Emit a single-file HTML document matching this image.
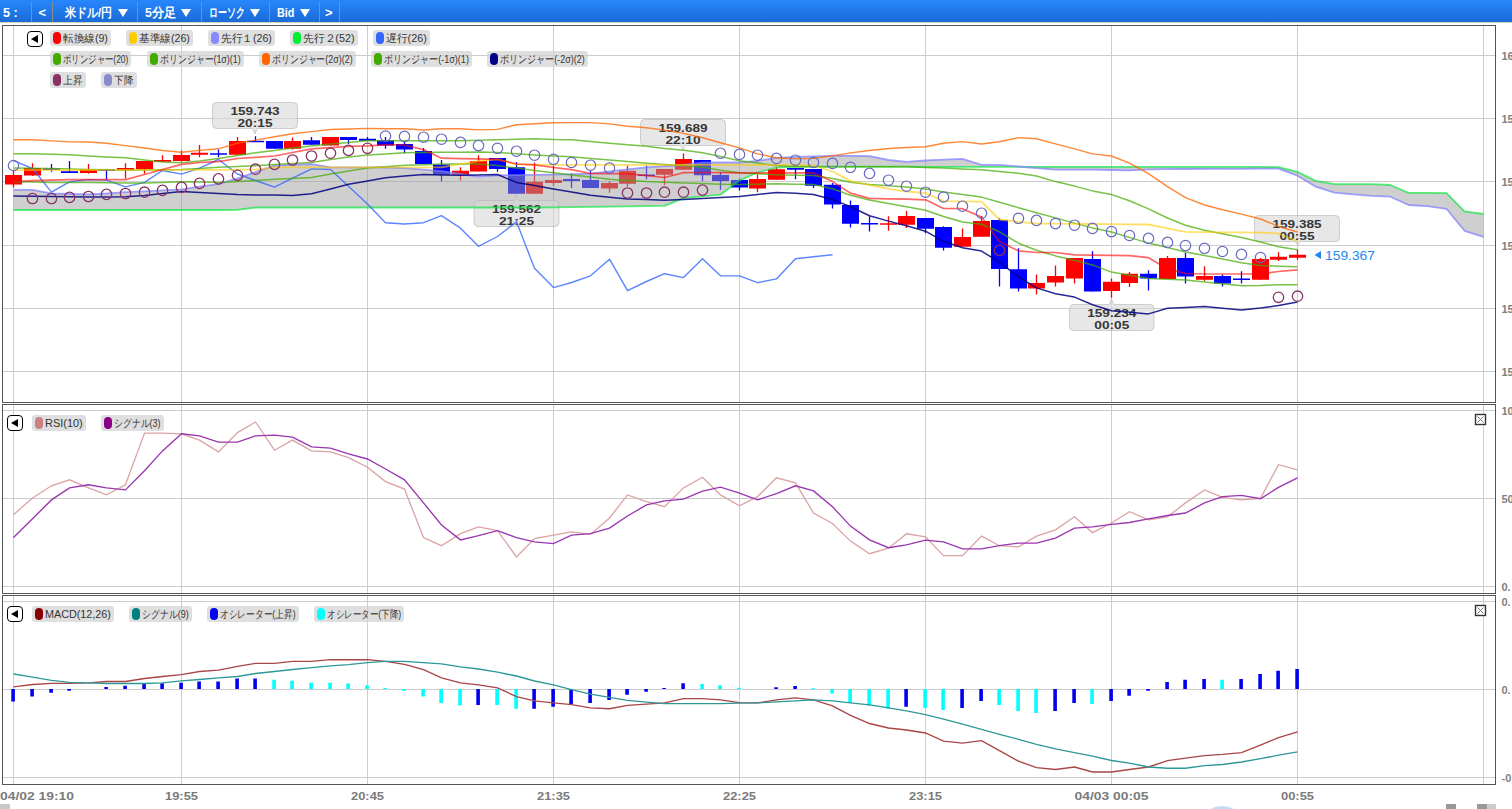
<!DOCTYPE html>
<html><head><meta charset="utf-8"><style>
html,body{margin:0;padding:0;background:#fff;}
body{width:1512px;height:809px;overflow:hidden;position:relative;font-family:"Liberation Sans",sans-serif;}
#hdr{position:absolute;left:0;top:0;width:1512px;height:22px;background:linear-gradient(#2886fd,#1a6bd6);}
#hline{position:absolute;left:0;top:22px;width:1512px;height:1px;background:#d2cfbd;}
.ht{position:absolute;top:5px;color:#fff;font-size:13px;font-weight:bold;line-height:16px;white-space:nowrap;}
.tri{position:absolute;top:9px;width:0;height:0;border-left:5px solid transparent;border-right:5px solid transparent;border-top:8px solid #fff;}
.sep{position:absolute;top:2px;width:1px;height:20px;background:#8c8c8c;}
svg{position:absolute;left:0;top:0;}
.bt{font:bold 11.5px "Liberation Sans",sans-serif;fill:#363636;}
.cp{font:13px "Liberation Sans",sans-serif;fill:#1e88ee;}
.ax{font:bold 11px "Liberation Sans",sans-serif;fill:#808080;}
.tl{font:bold 11px "Liberation Sans",sans-serif;fill:#7a7a7a;}
.pill{position:absolute;height:16px;line-height:16px;background:rgba(210,210,210,0.7);border-radius:3px;font-size:11px;color:#333;white-space:nowrap;}
.ptx{position:absolute;left:13px;top:0;display:inline-block;transform-origin:0 0;white-space:nowrap;}
.htx{display:inline-block;transform-origin:0 0;white-space:nowrap;}
.pill i{position:absolute;left:3px;top:2px;width:8px;height:12px;border-radius:4px;}
.tog{position:absolute;box-sizing:border-box;width:16px;height:16px;border:1.6px solid #000;border-radius:4px;background:#fff;}
.tog b{position:absolute;left:2.6px;top:2.6px;width:0;height:0;border-top:4px solid transparent;border-bottom:4px solid transparent;border-right:7px solid #000;}
</style></head><body>
<div id="hdr">
<div class="ht" style="left:2.5px"><span class="htx" data-k="htx|5 :" style="transform:scaleX(0.9689)">5 :</span></div>
<div class="ht" style="left:38.4px"><span class="htx" data-k="htx|&lt;" style="transform:scaleX(1.0000)">&lt;</span></div>
<div class="ht" style="left:64.8px"><span class="htx" data-k="htx|米ドル/円" style="transform:scaleX(0.8485)">米ドル/円</span></div>
<div class="ht" style="left:145.3px"><span class="htx" data-k="htx|5分足" style="transform:scaleX(0.9448)">5分足</span></div>
<div class="ht" style="left:208.9px"><span class="htx" data-k="htx|ローソク" style="transform:scaleX(0.6865)">ローソク</span></div>
<div class="ht" style="left:276.8px"><span class="htx" data-k="htx|Bid" style="transform:scaleX(0.8304)">Bid</span></div>
<div class="ht" style="left:325px"><span class="htx" data-k="htx|&gt;" style="transform:scaleX(1.0000)">&gt;</span></div>
<div class="tri" style="left:118px"></div>
<div class="tri" style="left:181.3px"></div>
<div class="tri" style="left:250px"></div>
<div class="tri" style="left:300.2px"></div>
<span class="sep" style="left:31px"></span>
<span class="sep" style="left:52px"></span>
<span class="sep" style="left:137px"></span>
<span class="sep" style="left:201px"></span>
<span class="sep" style="left:269px"></span>
<span class="sep" style="left:319px"></span>
<span class="sep" style="left:339px"></span>
</div><div id="hline"></div>
<svg width="1512" height="809" viewBox="0 0 1512 809">
<path d="M13.5 25 V402 M181.5 25 V402 M367.5 25 V402 M553.5 25 V402 M739.5 25 V402 M925.5 25 V402 M1111.5 25 V402 M1297.5 25 V402 M1483.5 25 V402 M3 55.5 H1496 M3 118.5 H1496 M3 181.5 H1496 M3 245.5 H1496 M3 308.5 H1496 M3 371.5 H1496 M13.5 404 V593 M181.5 404 V593 M367.5 404 V593 M553.5 404 V593 M739.5 404 V593 M925.5 404 V593 M1111.5 404 V593 M1297.5 404 V593 M1483.5 404 V593 M3 410.5 H1496 M3 498.5 H1496 M3 586.5 H1496 M13.5 595 V784 M181.5 595 V784 M367.5 595 V784 M553.5 595 V784 M739.5 595 V784 M925.5 595 V784 M1111.5 595 V784 M1297.5 595 V784 M1483.5 595 V784 M3 601.5 H1496 M3 689.5 H1496 M3 777.5 H1496" stroke="#cccccc" stroke-width="1" fill="none"/>
<path d="M5 175 h17 v9.5 h-17 Z M24 168.1 h17 v7.5 h-17 Z M80 169.5 h17 v3.4 h-17 Z M117 168 h17 v2.2 h-17 Z M136 160.9 h17 v8.3 h-17 Z M154 160 h17 v1.7 h-17 Z M173 154.9 h17 v6 h-17 Z M191 152.8 h17 v2 h-17 Z M229 141.1 h17 v13.7 h-17 Z M284 141.1 h17 v7.7 h-17 Z M322 137.1 h17 v8.5 h-17 Z M452 170.8 h17 v4 h-17 Z M470 160.9 h17 v10.7 h-17 Z M526 181.7 h17 v12.1 h-17 Z M545 180.1 h17 v2.9 h-17 Z M601 183 h17 v5.5 h-17 Z M619 170.8 h17 v12.9 h-17 Z M656 168.9 h17 v5.9 h-17 Z M675 158.9 h17 v10.8 h-17 Z M749 178.9 h17 v9.6 h-17 Z M768 169.2 h17 v10.5 h-17 Z M880 223.3 h17 v1.5 h-17 Z M898 216 h17 v8.7 h-17 Z M954 237.1 h17 v9.6 h-17 Z M973 221 h17 v15.8 h-17 Z M1028 283 h17 v5.5 h-17 Z M1047 276.1 h17 v6.4 h-17 Z M1066 258.1 h17 v20.4 h-17 Z M1103 281.7 h17 v9.2 h-17 Z M1121 273.7 h17 v9.2 h-17 Z M1159 258 h17 v20.9 h-17 Z M1196 276.1 h17 v3.7 h-17 Z M1252 258.9 h17 v20.8 h-17 Z M1270 256.7 h17 v3 h-17 Z M1289 254.7 h17 v3.1 h-17 Z" stroke="#ff0000" stroke-width="0" fill="#ff0000"/>
<path d="M13.5 170.5 V187.4 M32.5 163.3 V176 M88.5 164 V173.8 M125.5 163.3 V178.5 M144.5 160.9 V173.7 M162.5 155.2 V161.7 M181.5 150.4 V161.7 M199.5 145.1 V157.3 M237.5 137.1 V154.8 M292.5 137.6 V149.6 M330.5 137.1 V145.6 M460.5 167.3 V180.5 M478.5 155.2 V171.6 M534.5 162.5 V193.8 M553.5 165.7 V185.8 M609.5 181 V192.7 M627.5 165.7 V186.6 M664.5 168.9 V185 M683.5 153.6 V169.7 M757.5 174.5 V192.2 M776.5 167.3 V179.7 M888.5 216.3 V230.7 M906.5 211 V227.9 M962.5 228.4 V246.7 M981.5 215.9 V236.8 M1036.5 274.5 V294.6 M1055.5 265.4 V286.6 M1074.5 258.1 V283.4 M1111.5 278.5 V297.8 M1129.5 272.1 V286.9 M1167.5 256 V278.9 M1204.5 266.2 V280.9 M1260.5 258 V279.7 M1278.5 252.3 V261 M1297.5 249.5 V259.7" stroke="#ff0000" stroke-width="1.3" fill="none"/>
<path d="M43 168.4 h17 v1.5 h-17 Z M61 171.2 h17 v1.7 h-17 Z M98 169.2 h17 v1.5 h-17 Z M210 153.2 h17 v1.6 h-17 Z M247 140.8 h17 v1.5 h-17 Z M266 141.1 h17 v7.7 h-17 Z M303 140.3 h17 v4.5 h-17 Z M340 137.1 h17 v2.9 h-17 Z M359 138.7 h17 v2.1 h-17 Z M377 140.3 h17 v5.3 h-17 Z M396 144 h17 v5.6 h-17 Z M415 150.9 h17 v13.2 h-17 Z M433 164.4 h17 v10.4 h-17 Z M489 158 h17 v10.9 h-17 Z M508 167.3 h17 v26.5 h-17 Z M563 178.9 h17 v2 h-17 Z M582 180.1 h17 v7.8 h-17 Z M638 174.5 h17 v1.5 h-17 Z M694 160.1 h17 v15.2 h-17 Z M712 175 h17 v5.9 h-17 Z M731 180.1 h17 v7.3 h-17 Z M787 168.1 h17 v1.6 h-17 Z M805 168.9 h17 v16.9 h-17 Z M824 184.8 h17 v19.7 h-17 Z M842 205 h17 v18.8 h-17 Z M861 223 h17 v1.6 h-17 Z M917 218 h17 v10.7 h-17 Z M935 227.1 h17 v20.6 h-17 Z M991 219.9 h17 v49 h-17 Z M1010 269.2 h17 v19.3 h-17 Z M1084 258.9 h17 v32.6 h-17 Z M1140 273.7 h17 v4.8 h-17 Z M1177 258 h17 v18.6 h-17 Z M1214 276.1 h17 v7.3 h-17 Z M1233 278.5 h17 v1.5 h-17 Z" stroke="#0000ff" stroke-width="0" fill="#0000ff"/>
<path d="M51.5 164 V171.8 M69.5 160.9 V172.9 M106.5 169.2 V179.5 M218.5 149.6 V157.3 M255.5 136.3 V141.9 M274.5 141.1 V148.8 M311.5 137.1 V144.8 M348.5 137.1 V144 M367.5 137.1 V140.8 M385.5 137.1 V148.8 M404.5 141.6 V153.2 M423.5 148 V164.1 M441.5 160.1 V181.4 M497.5 158 V171.8 M516.5 162.1 V193.8 M571.5 173.4 V187.9 M590.5 171.3 V187.9 M646.5 165.7 V179.3 M702.5 160.1 V180.9 M720.5 172.1 V189.8 M739.5 178.5 V190.6 M795.5 168.1 V179.3 M813.5 168.9 V187.9 M832.5 183 V208.6 M850.5 200.5 V227.5 M869.5 216.3 V231.4 M925.5 218 V233.2 M943.5 226.3 V250.4 M999.5 218.3 V286.6 M1018.5 248.3 V291.4 M1092.5 251.2 V291.5 M1148.5 270.2 V290.6 M1185.5 252.8 V283.4 M1222.5 274.5 V286.6 M1241.5 271.3 V283.4" stroke="#0000ff" stroke-width="1.3" fill="none"/>
<polygon points="13.5,189.8 32.5,189.9 51.5,193.5 69.5,194 88.5,194.3 106.5,193.5 125.5,192.2 144.5,191.3 162.5,190.4 181.5,189.4 199.5,186.6 218.5,184.2 237.5,178.4 255.5,172.2 274.5,165.7 292.5,164.9 311.5,164.1 330.5,167.3 348.5,167.3 367.5,167.3 385.5,167.5 404.5,168.1 423.5,169.7 441.5,171.2 460.5,174 478.5,176.7 497.5,175.4 516.5,175.1 534.5,174.8 553.5,174.6 571.5,174.2 590.5,173.7 609.5,171.4 627.5,169.4 646.5,167.4 664.5,166.2 683.5,165 702.5,162.6 720.5,162.5 739.5,162.5 757.5,161 776.5,157.9 795.5,156.8 813.5,156.3 832.5,155.7 850.5,155.8 869.5,156.1 888.5,160 906.5,161.8 925.5,160.5 943.5,159.7 962.5,158.9 981.5,164.9 999.5,164.9 1018.5,166.5 1036.5,168.1 1055.5,169.7 1074.5,169.7 1092.5,169.7 1111.5,170 1129.5,170.4 1148.5,169.3 1167.5,169.1 1185.5,169 1204.5,168.9 1222.5,168.9 1241.5,168.8 1260.5,168.7 1278.5,168.6 1297.5,175.7 1315.5,186.6 1334.5,192.7 1353.5,194.3 1371.5,195.8 1390.5,196.7 1408.5,205 1427.5,206.2 1446.5,208.8 1464.5,230.8 1483.5,236.8 1483.5,214 1464.5,211.3 1446.5,193.1 1427.5,192.8 1408.5,192.8 1390.5,185 1371.5,184.2 1353.5,184.2 1334.5,184.2 1315.5,180.9 1297.5,171.9 1278.5,167.1 1260.5,166.9 1241.5,166.9 1222.5,166.9 1204.5,166.9 1185.5,166.9 1167.5,166.9 1148.5,166.9 1129.5,166.9 1111.5,166.8 1092.5,166.8 1074.5,166.8 1055.5,166.8 1036.5,166.8 1018.5,166.8 999.5,166.8 981.5,166.8 962.5,166.8 943.5,166.8 925.5,166.8 906.5,166.7 888.5,166.7 869.5,166.7 850.5,166.7 832.5,166.7 813.5,166.7 795.5,166.7 776.5,167.6 757.5,172.5 739.5,180.4 720.5,194.7 702.5,196.3 683.5,198.2 664.5,205.8 646.5,206.1 627.5,206.3 609.5,206.6 590.5,206.8 571.5,207.1 553.5,207.3 534.5,207.5 516.5,207.5 497.5,207.5 478.5,207.5 460.5,207.5 441.5,207.5 423.5,207.5 404.5,207.5 385.5,207.5 367.5,207.5 348.5,207.5 330.5,207.5 311.5,207.5 292.5,207.5 274.5,207.5 255.5,207.5 237.5,209.8 218.5,210 199.5,210 181.5,210 162.5,210 144.5,210 125.5,210 106.5,210 88.5,210 69.5,210 51.5,210 32.5,210 13.5,210" fill="rgba(160,160,160,0.5)"/>
<path d="M216.5 102.5 H293.5 Q297.5 102.5 297.5 106.5 V124.5 Q297.5 128.5 293.5 128.5 H257.2 L255 134 L252.8 128.5 H216.5 Q212.5 128.5 212.5 124.5 V106.5 Q212.5 102.5 216.5 102.5 Z" fill="rgba(215,215,215,0.6)" stroke="rgba(180,180,180,0.6)" stroke-width="1"/>
<text x="255" y="115" text-anchor="middle" class="bt" textLength="49" lengthAdjust="spacingAndGlyphs">159.743</text>
<text x="255" y="127" text-anchor="middle" class="bt" textLength="35" lengthAdjust="spacingAndGlyphs">20:15</text>
<path d="M644.5 119.5 H721.5 Q725.5 119.5 725.5 123.5 V141.5 Q725.5 145.5 721.5 145.5 H685.2 L683 150 L680.8 145.5 H644.5 Q640.5 145.5 640.5 141.5 V123.5 Q640.5 119.5 644.5 119.5 Z" fill="rgba(215,215,215,0.6)" stroke="rgba(180,180,180,0.6)" stroke-width="1"/>
<text x="683" y="132" text-anchor="middle" class="bt" textLength="49" lengthAdjust="spacingAndGlyphs">159.689</text>
<text x="683" y="144" text-anchor="middle" class="bt" textLength="35" lengthAdjust="spacingAndGlyphs">22:10</text>
<path d="M478 200.5 H514.3 L516.5 195.5 L518.7 200.5 H555 Q559 200.5 559 204.5 V222.5 Q559 226.5 555 226.5 H478 Q474 226.5 474 222.5 V204.5 Q474 200.5 478 200.5 Z" fill="rgba(215,215,215,0.6)" stroke="rgba(180,180,180,0.6)" stroke-width="1"/>
<text x="516.5" y="213" text-anchor="middle" class="bt" textLength="49" lengthAdjust="spacingAndGlyphs">159.562</text>
<text x="516.5" y="225" text-anchor="middle" class="bt" textLength="35" lengthAdjust="spacingAndGlyphs">21:25</text>
<path d="M1073.5 304.5 H1109.3 L1111.5 299 L1113.7 304.5 H1150 Q1154 304.5 1154 308.5 V326.5 Q1154 330.5 1150 330.5 H1073.5 Q1069.5 330.5 1069.5 326.5 V308.5 Q1069.5 304.5 1073.5 304.5 Z" fill="rgba(215,215,215,0.6)" stroke="rgba(180,180,180,0.6)" stroke-width="1"/>
<text x="1111.8" y="317" text-anchor="middle" class="bt" textLength="49" lengthAdjust="spacingAndGlyphs">159.234</text>
<text x="1111.8" y="329" text-anchor="middle" class="bt" textLength="35" lengthAdjust="spacingAndGlyphs">00:05</text>
<path d="M1258.5 215.5 H1335.5 Q1339.5 215.5 1339.5 219.5 V237.5 Q1339.5 241.5 1335.5 241.5 H1299.7 L1297.5 245.5 L1295.3 241.5 H1258.5 Q1254.5 241.5 1254.5 237.5 V219.5 Q1254.5 215.5 1258.5 215.5 Z" fill="rgba(215,215,215,0.6)" stroke="rgba(180,180,180,0.6)" stroke-width="1"/>
<text x="1297" y="228" text-anchor="middle" class="bt" textLength="49" lengthAdjust="spacingAndGlyphs">159.385</text>
<text x="1297" y="240" text-anchor="middle" class="bt" textLength="35" lengthAdjust="spacingAndGlyphs">00:55</text>
<polyline points="13.5,210 32.5,210 51.5,210 69.5,210 88.5,210 106.5,210 125.5,210 144.5,210 162.5,210 181.5,210 199.5,210 218.5,210 237.5,209.8 255.5,207.5 274.5,207.5 292.5,207.5 311.5,207.5 330.5,207.5 348.5,207.5 367.5,207.5 385.5,207.5 404.5,207.5 423.5,207.5 441.5,207.5 460.5,207.5 478.5,207.5 497.5,207.5 516.5,207.5 534.5,207.5 553.5,207.3 571.5,207.1 590.5,206.8 609.5,206.6 627.5,206.3 646.5,206.1 664.5,205.8 683.5,198.2 702.5,196.3 720.5,194.7 739.5,180.4 757.5,172.5 776.5,167.6 795.5,166.7 813.5,166.7 832.5,166.7 850.5,166.7 869.5,166.7 888.5,166.7 906.5,166.7 925.5,166.8 943.5,166.8 962.5,166.8 981.5,166.8 999.5,166.8 1018.5,166.8 1036.5,166.8 1055.5,166.8 1074.5,166.8 1092.5,166.8 1111.5,166.8 1129.5,166.9 1148.5,166.9 1167.5,166.9 1185.5,166.9 1204.5,166.9 1222.5,166.9 1241.5,166.9 1260.5,166.9 1278.5,167.1 1297.5,171.9 1315.5,180.9 1334.5,184.2 1353.5,184.2 1371.5,184.2 1390.5,185 1408.5,192.8 1427.5,192.8 1446.5,193.1 1464.5,211.3 1483.5,214" fill="none" stroke="#00e636" stroke-width="1.8" stroke-linejoin="round" stroke-opacity="0.65"/>
<polyline points="13.5,189.8 32.5,189.9 51.5,193.5 69.5,194 88.5,194.3 106.5,193.5 125.5,192.2 144.5,191.3 162.5,190.4 181.5,189.4 199.5,186.6 218.5,184.2 237.5,178.4 255.5,172.2 274.5,165.7 292.5,164.9 311.5,164.1 330.5,167.3 348.5,167.3 367.5,167.3 385.5,167.5 404.5,168.1 423.5,169.7 441.5,171.2 460.5,174 478.5,176.7 497.5,175.4 516.5,175.1 534.5,174.8 553.5,174.6 571.5,174.2 590.5,173.7 609.5,171.4 627.5,169.4 646.5,167.4 664.5,166.2 683.5,165 702.5,162.6 720.5,162.5 739.5,162.5 757.5,161 776.5,157.9 795.5,156.8 813.5,156.3 832.5,155.7 850.5,155.8 869.5,156.1 888.5,160 906.5,161.8 925.5,160.5 943.5,159.7 962.5,158.9 981.5,164.9 999.5,164.9 1018.5,166.5 1036.5,168.1 1055.5,169.7 1074.5,169.7 1092.5,169.7 1111.5,170 1129.5,170.4 1148.5,169.3 1167.5,169.1 1185.5,169 1204.5,168.9 1222.5,168.9 1241.5,168.8 1260.5,168.7 1278.5,168.6 1297.5,175.7 1315.5,186.6 1334.5,192.7 1353.5,194.3 1371.5,195.8 1390.5,196.7 1408.5,205 1427.5,206.2 1446.5,208.8 1464.5,230.8 1483.5,236.8" fill="none" stroke="#8080ff" stroke-width="1.8" stroke-linejoin="round" stroke-opacity="0.72"/>
<polyline points="13.5,160.6 32.5,168.5 51.5,192.1 69.5,181.8 88.5,179.6 106.5,180.1 125.5,186.9 144.5,182.4 162.5,170.5 181.5,174.1 199.5,168.2 218.5,159.5 237.5,174 255.5,180.5 274.5,187.1 292.5,178.1 311.5,168.9 330.5,169.5 348.5,186.2 367.5,203.9 385.5,222.7 404.5,224 423.5,222.7 441.5,215.7 460.5,228.2 478.5,246.3 497.5,236.5 516.5,221.8 534.5,268.2 553.5,287.6 571.5,282.5 590.5,275.8 609.5,259.2 627.5,290.7 646.5,281.5 664.5,273.7 683.5,277.6 702.5,258.7 720.5,275.7 739.5,275.9 757.5,282.7 776.5,278.9 795.5,258.7 813.5,256.8 832.5,254.8" fill="none" stroke="#3366ff" stroke-width="1.4" stroke-linejoin="round" stroke-opacity="0.8"/>
<polyline points="13.5,196.1 32.5,196.3 51.5,196.6 69.5,196.8 88.5,196.9 106.5,197 125.5,196.8 144.5,195.4 162.5,193.4 181.5,191.4 199.5,192.5 218.5,193.6 237.5,194.6 255.5,194.9 274.5,195.1 292.5,195.4 311.5,193.8 330.5,189 348.5,184.3 367.5,181 385.5,177.7 404.5,176.1 423.5,174.5 441.5,174.9 460.5,175.3 478.5,174.9 497.5,174.5 516.5,182.4 534.5,185.6 553.5,189 571.5,192 590.5,195.3 609.5,197.2 627.5,199 646.5,199.6 664.5,200.2 683.5,199.4 702.5,198.6 720.5,197.6 739.5,196.5 757.5,194.5 776.5,192.5 795.5,193.3 813.5,194.4 832.5,199.4 850.5,206.8 869.5,215.8 888.5,221.1 906.5,225.7 925.5,231.2 943.5,241.3 962.5,247.7 981.5,251.1 999.5,262.2 1018.5,277 1036.5,287.9 1055.5,293.7 1074.5,297.1 1092.5,304.8 1111.5,310.7 1129.5,312.2 1148.5,313.9 1167.5,308.3 1185.5,307.5 1204.5,306.6 1222.5,308.2 1241.5,309.9 1260.5,307.9 1278.5,305.6 1297.5,301.9" fill="none" stroke="#000080" stroke-width="1.5" stroke-linejoin="round" stroke-opacity="0.85"/>
<polyline points="13.5,181.8 32.5,182.1 51.5,182.4 69.5,182.4 88.5,182.4 106.5,182.7 125.5,183 144.5,183 162.5,182.4 181.5,181.7 199.5,182.1 218.5,182.5 237.5,181.4 255.5,180.4 274.5,179.3 292.5,178.4 311.5,177.4 330.5,174.1 348.5,171.1 367.5,168 385.5,166.7 404.5,165.3 423.5,164.7 441.5,164.1 460.5,164.1 478.5,164.1 497.5,165.6 516.5,168.1 534.5,170.5 553.5,172.8 571.5,174.9 590.5,177.1 609.5,179.2 627.5,180.4 646.5,181.6 664.5,182.3 683.5,183 702.5,183.6 720.5,184.2 739.5,184.5 757.5,184.2 776.5,183.8 795.5,184.2 813.5,184.6 832.5,188.8 850.5,195.3 869.5,200.1 888.5,203.5 906.5,206.7 925.5,210.3 943.5,216.5 962.5,222 981.5,224.3 999.5,231.8 1018.5,243.2 1036.5,250.2 1055.5,255.9 1074.5,260.2 1092.5,264.9 1111.5,272.1 1129.5,275.2 1148.5,278.5 1167.5,279.3 1185.5,280.1 1204.5,282 1222.5,283.8 1241.5,285.8 1260.5,285.5 1278.5,284.7 1297.5,284.7" fill="none" stroke="#44aa00" stroke-width="1.5" stroke-linejoin="round" stroke-opacity="0.72"/>
<polyline points="13.5,168 32.5,168.2 51.5,168.5 69.5,169 88.5,169.4 106.5,169.7 125.5,170 144.5,170 162.5,169.8 181.5,169.6 199.5,168.5 218.5,167.3 237.5,166.5 255.5,165.7 274.5,164.6 292.5,163.6 311.5,162.5 330.5,159.6 348.5,156.9 367.5,155 385.5,153.9 404.5,152.8 423.5,152.6 441.5,152.3 460.5,152.2 478.5,152 497.5,152.5 516.5,153.8 534.5,155 553.5,156 571.5,156.7 590.5,158.4 609.5,160.1 627.5,161.6 646.5,163.2 664.5,164.4 683.5,165.6 702.5,167.2 720.5,170.3 739.5,172.8 757.5,173.8 776.5,174.8 795.5,175.3 813.5,175.6 832.5,178.4 850.5,182.2 869.5,184.5 888.5,185.8 906.5,187.1 925.5,189 943.5,192.1 962.5,194.6 981.5,197.1 999.5,202.3 1018.5,207.7 1036.5,212.7 1055.5,217.9 1074.5,223.1 1092.5,227.9 1111.5,232 1129.5,237.4 1148.5,243.1 1167.5,247.6 1185.5,251.9 1204.5,255.6 1222.5,259.1 1241.5,262.7 1260.5,265.5 1278.5,266.2 1297.5,266.8" fill="none" stroke="#44aa00" stroke-width="1.5" stroke-linejoin="round" stroke-opacity="0.72"/>
<polyline points="13.5,153.7 32.5,153.7 51.5,154.2 69.5,154.7 88.5,155.9 106.5,156.9 125.5,157.8 144.5,160.1 162.5,162.1 181.5,162.8 199.5,161 218.5,158.5 237.5,155.6 255.5,152.8 274.5,150.4 292.5,148.1 311.5,146 330.5,144 348.5,142.4 367.5,140.8 385.5,140.8 404.5,140.8 423.5,140.8 441.5,140.8 460.5,140.8 478.5,140.3 497.5,139.8 516.5,139.2 534.5,138.7 553.5,139.5 571.5,139.7 590.5,141.4 609.5,143.2 627.5,144.7 646.5,146.3 664.5,148.6 683.5,150.3 702.5,152.7 720.5,156.5 739.5,160.8 757.5,163.1 776.5,165.5 795.5,166.7 813.5,166.8 832.5,166.8 850.5,166.8 869.5,166.8 888.5,166.7 906.5,166.7 925.5,167.4 943.5,168.1 962.5,168.9 981.5,169.7 999.5,171.4 1018.5,173.2 1036.5,176 1055.5,181.6 1074.5,186.1 1092.5,190.9 1111.5,194.6 1129.5,200.8 1148.5,208.9 1167.5,218 1185.5,225.3 1204.5,230.3 1222.5,233.8 1241.5,237.4 1260.5,242 1278.5,246.7 1297.5,249.8" fill="none" stroke="#44aa00" stroke-width="1.5" stroke-linejoin="round" stroke-opacity="0.72"/>
<polyline points="13.5,139.7 32.5,139.7 51.5,140.9 69.5,141.9 88.5,142 106.5,143.3 125.5,145.6 144.5,148 162.5,150.5 181.5,152.2 199.5,150.4 218.5,148.8 237.5,143.1 255.5,140.1 274.5,136.8 292.5,133.7 311.5,131.6 330.5,129.5 348.5,129 367.5,128.4 385.5,128.7 404.5,128.7 423.5,130 441.5,128.7 460.5,128.7 478.5,129.9 497.5,129.4 516.5,124.7 534.5,123.7 553.5,122.8 571.5,122.6 590.5,122.6 609.5,123.9 627.5,126.2 646.5,127.8 664.5,130.1 683.5,133.4 702.5,137.8 720.5,142.7 739.5,147.9 757.5,153.9 776.5,157.8 795.5,158.9 813.5,158.4 832.5,155.9 850.5,152.9 869.5,150.5 888.5,148.5 906.5,147.5 925.5,146.7 943.5,143.3 962.5,141.6 981.5,144 999.5,141.7 1018.5,137.6 1036.5,138.7 1055.5,143.9 1074.5,148.9 1092.5,153.9 1111.5,156 1129.5,163.1 1148.5,173.6 1167.5,186.7 1185.5,197.6 1204.5,205 1222.5,209.7 1241.5,214.1 1260.5,219 1278.5,226.3 1297.5,232" fill="none" stroke="#ff6600" stroke-width="1.4" stroke-linejoin="round" stroke-opacity="0.78"/>
<polyline points="13.5,170.1 32.5,170.1 51.5,170 69.5,170 88.5,170 106.5,169.9 125.5,169.9 144.5,169.9 162.5,169.9 181.5,169.8 199.5,169.8 218.5,169.8 237.5,169.7 255.5,169.6 274.5,167.3 292.5,167.3 311.5,167.3 330.5,167.3 348.5,167.3 367.5,167.3 385.5,167.3 404.5,167.3 423.5,167.3 441.5,167.3 460.5,164.2 478.5,161.1 497.5,159.4 516.5,164.3 534.5,164.6 553.5,164.8 571.5,164.9 590.5,164.9 609.5,164.9 627.5,164.9 646.5,164.9 664.5,164.9 683.5,164.9 702.5,164.9 720.5,164.9 739.5,164.9 757.5,164.9 776.5,164.9 795.5,164.9 813.5,165.5 832.5,171.5 850.5,180.9 869.5,185.1 888.5,188.9 906.5,191.7 925.5,193 943.5,201.1 962.5,201.3 981.5,201.6 999.5,219.5 1018.5,221.8 1036.5,223.6 1055.5,223.7 1074.5,223.9 1092.5,224 1111.5,224.2 1129.5,224.3 1148.5,224.5 1167.5,228.3 1185.5,231.9 1204.5,232.1 1222.5,232.3 1241.5,232.4 1260.5,232.6 1278.5,233.5 1297.5,241.5" fill="none" stroke="#ffcc00" stroke-width="1.8" stroke-linejoin="round" stroke-opacity="0.6"/>
<polyline points="13.5,181.8 32.5,180.6 51.5,180.1 69.5,179.6 88.5,179.6 106.5,179.6 125.5,179.6 144.5,174.5 162.5,169.5 181.5,164.4 199.5,162.5 218.5,161.7 237.5,158.5 255.5,157.3 274.5,156 292.5,152.5 311.5,148.8 330.5,147.6 348.5,146.4 367.5,145.8 385.5,144.8 404.5,145 423.5,149.6 441.5,158.2 460.5,158.6 478.5,158.8 497.5,159.3 516.5,164 534.5,164.9 553.5,167.5 571.5,169.6 590.5,173.5 609.5,173.7 627.5,173.7 646.5,175.6 664.5,177.5 683.5,172.7 702.5,172.5 720.5,172.7 739.5,172.8 757.5,172.8 776.5,172.9 795.5,172.9 813.5,172.9 832.5,181.6 850.5,193.1 869.5,198.4 888.5,198.8 906.5,199.2 925.5,199.8 943.5,208.5 962.5,208.7 981.5,217.1 999.5,241.7 1018.5,250.9 1036.5,252.5 1055.5,252.5 1074.5,254.8 1092.5,255.1 1111.5,255.4 1129.5,255.7 1148.5,257.7 1167.5,268.9 1185.5,273.5 1204.5,274 1222.5,274 1241.5,274 1260.5,274 1278.5,271.5 1297.5,269.9" fill="none" stroke="#ff0000" stroke-width="1.7" stroke-linejoin="round" stroke-opacity="0.6"/>
<path d="M27.3 198.5 a5.2 5.2 0 1 0 10.4 0 a5.2 5.2 0 1 0 -10.4 0 M46.3 198.5 a5.2 5.2 0 1 0 10.4 0 a5.2 5.2 0 1 0 -10.4 0 M64.3 197.4 a5.2 5.2 0 1 0 10.4 0 a5.2 5.2 0 1 0 -10.4 0 M83.3 196.5 a5.2 5.2 0 1 0 10.4 0 a5.2 5.2 0 1 0 -10.4 0 M101.3 194.4 a5.2 5.2 0 1 0 10.4 0 a5.2 5.2 0 1 0 -10.4 0 M120.3 193.5 a5.2 5.2 0 1 0 10.4 0 a5.2 5.2 0 1 0 -10.4 0 M139.3 192.2 a5.2 5.2 0 1 0 10.4 0 a5.2 5.2 0 1 0 -10.4 0 M157.3 190.4 a5.2 5.2 0 1 0 10.4 0 a5.2 5.2 0 1 0 -10.4 0 M176.3 187.4 a5.2 5.2 0 1 0 10.4 0 a5.2 5.2 0 1 0 -10.4 0 M194.3 183.4 a5.2 5.2 0 1 0 10.4 0 a5.2 5.2 0 1 0 -10.4 0 M213.3 178.9 a5.2 5.2 0 1 0 10.4 0 a5.2 5.2 0 1 0 -10.4 0 M232.3 175.3 a5.2 5.2 0 1 0 10.4 0 a5.2 5.2 0 1 0 -10.4 0 M250.3 169.2 a5.2 5.2 0 1 0 10.4 0 a5.2 5.2 0 1 0 -10.4 0 M269.3 164.4 a5.2 5.2 0 1 0 10.4 0 a5.2 5.2 0 1 0 -10.4 0 M287.3 160 a5.2 5.2 0 1 0 10.4 0 a5.2 5.2 0 1 0 -10.4 0 M306.3 156 a5.2 5.2 0 1 0 10.4 0 a5.2 5.2 0 1 0 -10.4 0 M325.3 153.2 a5.2 5.2 0 1 0 10.4 0 a5.2 5.2 0 1 0 -10.4 0 M343.3 150.4 a5.2 5.2 0 1 0 10.4 0 a5.2 5.2 0 1 0 -10.4 0 M362.3 148.3 a5.2 5.2 0 1 0 10.4 0 a5.2 5.2 0 1 0 -10.4 0 M622.3 193 a5.2 5.2 0 1 0 10.4 0 a5.2 5.2 0 1 0 -10.4 0 M641.3 193 a5.2 5.2 0 1 0 10.4 0 a5.2 5.2 0 1 0 -10.4 0 M659.3 192.2 a5.2 5.2 0 1 0 10.4 0 a5.2 5.2 0 1 0 -10.4 0 M678.3 192.2 a5.2 5.2 0 1 0 10.4 0 a5.2 5.2 0 1 0 -10.4 0 M697.3 190.1 a5.2 5.2 0 1 0 10.4 0 a5.2 5.2 0 1 0 -10.4 0 M994.3 250.4 a5.2 5.2 0 1 0 10.4 0 a5.2 5.2 0 1 0 -10.4 0 M1273.3 297.3 a5.2 5.2 0 1 0 10.4 0 a5.2 5.2 0 1 0 -10.4 0 M1292.3 296.2 a5.2 5.2 0 1 0 10.4 0 a5.2 5.2 0 1 0 -10.4 0" fill="none" stroke="#883366" stroke-width="1.3"/>
<path d="M8.3 165.5 a5.2 5.2 0 1 0 10.4 0 a5.2 5.2 0 1 0 -10.4 0 M380.3 136 a5.2 5.2 0 1 0 10.4 0 a5.2 5.2 0 1 0 -10.4 0 M399.3 136.4 a5.2 5.2 0 1 0 10.4 0 a5.2 5.2 0 1 0 -10.4 0 M418.3 137.2 a5.2 5.2 0 1 0 10.4 0 a5.2 5.2 0 1 0 -10.4 0 M436.3 139.2 a5.2 5.2 0 1 0 10.4 0 a5.2 5.2 0 1 0 -10.4 0 M455.3 142.4 a5.2 5.2 0 1 0 10.4 0 a5.2 5.2 0 1 0 -10.4 0 M473.3 145.6 a5.2 5.2 0 1 0 10.4 0 a5.2 5.2 0 1 0 -10.4 0 M492.3 148.3 a5.2 5.2 0 1 0 10.4 0 a5.2 5.2 0 1 0 -10.4 0 M511.3 151.2 a5.2 5.2 0 1 0 10.4 0 a5.2 5.2 0 1 0 -10.4 0 M529.3 155.2 a5.2 5.2 0 1 0 10.4 0 a5.2 5.2 0 1 0 -10.4 0 M548.3 159.3 a5.2 5.2 0 1 0 10.4 0 a5.2 5.2 0 1 0 -10.4 0 M566.3 162.5 a5.2 5.2 0 1 0 10.4 0 a5.2 5.2 0 1 0 -10.4 0 M585.3 165.2 a5.2 5.2 0 1 0 10.4 0 a5.2 5.2 0 1 0 -10.4 0 M604.3 168.1 a5.2 5.2 0 1 0 10.4 0 a5.2 5.2 0 1 0 -10.4 0 M715.3 153.2 a5.2 5.2 0 1 0 10.4 0 a5.2 5.2 0 1 0 -10.4 0 M734.3 154.4 a5.2 5.2 0 1 0 10.4 0 a5.2 5.2 0 1 0 -10.4 0 M752.3 155.2 a5.2 5.2 0 1 0 10.4 0 a5.2 5.2 0 1 0 -10.4 0 M771.3 158.4 a5.2 5.2 0 1 0 10.4 0 a5.2 5.2 0 1 0 -10.4 0 M790.3 160.2 a5.2 5.2 0 1 0 10.4 0 a5.2 5.2 0 1 0 -10.4 0 M808.3 162.5 a5.2 5.2 0 1 0 10.4 0 a5.2 5.2 0 1 0 -10.4 0 M827.3 163.4 a5.2 5.2 0 1 0 10.4 0 a5.2 5.2 0 1 0 -10.4 0 M845.3 167.3 a5.2 5.2 0 1 0 10.4 0 a5.2 5.2 0 1 0 -10.4 0 M864.3 173.4 a5.2 5.2 0 1 0 10.4 0 a5.2 5.2 0 1 0 -10.4 0 M883.3 180.2 a5.2 5.2 0 1 0 10.4 0 a5.2 5.2 0 1 0 -10.4 0 M901.3 186.2 a5.2 5.2 0 1 0 10.4 0 a5.2 5.2 0 1 0 -10.4 0 M920.3 192.2 a5.2 5.2 0 1 0 10.4 0 a5.2 5.2 0 1 0 -10.4 0 M938.3 197 a5.2 5.2 0 1 0 10.4 0 a5.2 5.2 0 1 0 -10.4 0 M957.3 206.2 a5.2 5.2 0 1 0 10.4 0 a5.2 5.2 0 1 0 -10.4 0 M976.3 213.2 a5.2 5.2 0 1 0 10.4 0 a5.2 5.2 0 1 0 -10.4 0 M1013.3 218.3 a5.2 5.2 0 1 0 10.4 0 a5.2 5.2 0 1 0 -10.4 0 M1031.3 220.4 a5.2 5.2 0 1 0 10.4 0 a5.2 5.2 0 1 0 -10.4 0 M1050.3 223.6 a5.2 5.2 0 1 0 10.4 0 a5.2 5.2 0 1 0 -10.4 0 M1069.3 225.2 a5.2 5.2 0 1 0 10.4 0 a5.2 5.2 0 1 0 -10.4 0 M1087.3 228.4 a5.2 5.2 0 1 0 10.4 0 a5.2 5.2 0 1 0 -10.4 0 M1106.3 231.6 a5.2 5.2 0 1 0 10.4 0 a5.2 5.2 0 1 0 -10.4 0 M1124.3 235.5 a5.2 5.2 0 1 0 10.4 0 a5.2 5.2 0 1 0 -10.4 0 M1143.3 238.4 a5.2 5.2 0 1 0 10.4 0 a5.2 5.2 0 1 0 -10.4 0 M1162.3 242.4 a5.2 5.2 0 1 0 10.4 0 a5.2 5.2 0 1 0 -10.4 0 M1180.3 245.6 a5.2 5.2 0 1 0 10.4 0 a5.2 5.2 0 1 0 -10.4 0 M1199.3 248.3 a5.2 5.2 0 1 0 10.4 0 a5.2 5.2 0 1 0 -10.4 0 M1217.3 251.5 a5.2 5.2 0 1 0 10.4 0 a5.2 5.2 0 1 0 -10.4 0 M1236.3 254.4 a5.2 5.2 0 1 0 10.4 0 a5.2 5.2 0 1 0 -10.4 0 M1255.3 257.5 a5.2 5.2 0 1 0 10.4 0 a5.2 5.2 0 1 0 -10.4 0" fill="none" stroke="#6868c0" stroke-width="1.2"/>
<path d="M1314.5 255 L1321 251 V259 Z" fill="#1e88ee"/>
<text x="1325" y="260" class="cp" textLength="50" lengthAdjust="spacingAndGlyphs">159.367</text>
<polyline points="13.5,514.7 32.5,497.9 51.5,485.8 69.5,479.8 88.5,487.9 106.5,494.9 125.5,484.8 144.5,433.1 162.5,433.1 181.5,433.8 199.5,440.1 218.5,451.9 237.5,432.6 255.5,422 274.5,450.2 292.5,440.1 311.5,450.9 330.5,451.9 348.5,457.7 367.5,467.2 385.5,481.6 404.5,489.1 423.5,537.6 441.5,545.7 460.5,533.6 478.5,526.8 497.5,530.6 516.5,557 534.5,538.6 553.5,535.1 571.5,531.8 590.5,534.4 609.5,518 627.5,494.9 646.5,501.7 664.5,506.7 683.5,487.9 702.5,477.3 720.5,494.9 739.5,505.8 757.5,496.7 776.5,477.8 795.5,482.8 813.5,513 832.5,523.5 850.5,541.1 869.5,553.7 888.5,548.2 906.5,533.8 925.5,536.9 943.5,555.7 962.5,555.7 981.5,536.1 999.5,545.7 1018.5,546.9 1036.5,536.1 1055.5,529.8 1074.5,516.8 1092.5,532.6 1111.5,523 1129.5,511.7 1148.5,519.8 1167.5,516.8 1185.5,502.9 1204.5,489.9 1222.5,497.4 1241.5,499.9 1260.5,498.4 1278.5,464.7 1297.5,469.8" fill="none" stroke="#dba3a3" stroke-width="1.3"/>
<polyline points="13.5,537.6 32.5,518.8 51.5,499.9 69.5,487.9 88.5,484.8 106.5,487.9 125.5,489.9 144.5,470.8 162.5,450.9 181.5,433.8 199.5,435.8 218.5,442.1 237.5,442.1 255.5,435.8 274.5,435.1 292.5,437.1 311.5,446.9 330.5,448.1 348.5,453.9 367.5,459 385.5,469 404.5,479.8 423.5,502.9 441.5,525 460.5,539.9 478.5,535.6 497.5,530.6 516.5,537.6 534.5,541.9 553.5,543.6 571.5,535.1 590.5,533.6 609.5,528.1 627.5,516 646.5,504.9 664.5,500.9 683.5,499.2 702.5,491.1 720.5,487.1 739.5,493.1 757.5,499.9 776.5,493.6 795.5,485.8 813.5,490.9 832.5,506.7 850.5,526.1 869.5,539.9 888.5,547.7 906.5,544.9 925.5,540.1 943.5,541.9 962.5,548.9 981.5,548.9 999.5,545.7 1018.5,543.1 1036.5,543.1 1055.5,538.1 1074.5,528.1 1092.5,526.8 1111.5,524.3 1129.5,522.5 1148.5,518.8 1167.5,515.5 1185.5,513 1204.5,502.9 1222.5,496.7 1241.5,495.4 1260.5,498.7 1278.5,487.4 1297.5,477.8" fill="none" stroke="#9a36b0" stroke-width="1.35"/>
<path d="M11.3 689 h3.6 v12.6 h-3.6 Z M30.3 689 h3.6 v7.6 h-3.6 Z M49.3 689 h3.6 v3.8 h-3.6 Z M67.3 689 h3.6 v1.8 h-3.6 Z M104.3 687 h3.6 v2 h-3.6 Z M123.3 685.8 h3.6 v3.2 h-3.6 Z M142.3 684 h3.6 v5 h-3.6 Z M160.3 683.3 h3.6 v5.7 h-3.6 Z M179.3 682.8 h3.6 v6.2 h-3.6 Z M197.3 681.5 h3.6 v7.5 h-3.6 Z M216.3 681.5 h3.6 v7.5 h-3.6 Z M235.3 678.5 h3.6 v10.5 h-3.6 Z M253.3 678.5 h3.6 v10.5 h-3.6 Z M476.3 689 h3.6 v15.9 h-3.6 Z M532.3 689 h3.6 v19.7 h-3.6 Z M551.3 689 h3.6 v17.7 h-3.6 Z M569.3 689 h3.6 v15.1 h-3.6 Z M588.3 689 h3.6 v13.9 h-3.6 Z M607.3 689 h3.6 v10.9 h-3.6 Z M625.3 689 h3.6 v5.8 h-3.6 Z M644.3 689 h3.6 v2.8 h-3.6 Z M662.3 688 h3.6 v1 h-3.6 Z M681.3 683.3 h3.6 v5.7 h-3.6 Z M774.3 687.3 h3.6 v1.7 h-3.6 Z M793.3 686 h3.6 v3 h-3.6 Z M904.3 689 h3.6 v17.7 h-3.6 Z M960.3 689 h3.6 v18.9 h-3.6 Z M979.3 689 h3.6 v11.9 h-3.6 Z M1053.3 689 h3.6 v21.9 h-3.6 Z M1072.3 689 h3.6 v13.9 h-3.6 Z M1109.3 689 h3.6 v11.9 h-3.6 Z M1127.3 689 h3.6 v6.8 h-3.6 Z M1146.3 689 h3.6 v1.8 h-3.6 Z M1165.3 682 h3.6 v7 h-3.6 Z M1183.3 679.8 h3.6 v9.2 h-3.6 Z M1202.3 679 h3.6 v10 h-3.6 Z M1239.3 679 h3.6 v10 h-3.6 Z M1258.3 674 h3.6 v15 h-3.6 Z M1276.3 670.7 h3.6 v18.3 h-3.6 Z M1295.3 669 h3.6 v20 h-3.6 Z" fill="#0000ee"/>
<path d="M272.3 679.8 h3.6 v9.2 h-3.6 Z M290.3 680.8 h3.6 v8.2 h-3.6 Z M309.3 682.8 h3.6 v6.2 h-3.6 Z M328.3 682.8 h3.6 v6.2 h-3.6 Z M346.3 683.5 h3.6 v5.5 h-3.6 Z M365.3 685.3 h3.6 v3.7 h-3.6 Z M383.3 688 h3.6 v1 h-3.6 Z M402.3 689 h3.6 v1.8 h-3.6 Z M421.3 689 h3.6 v7.6 h-3.6 Z M439.3 689 h3.6 v13.9 h-3.6 Z M458.3 689 h3.6 v16.4 h-3.6 Z M495.3 689 h3.6 v15.9 h-3.6 Z M514.3 689 h3.6 v19.7 h-3.6 Z M700.3 684 h3.6 v5 h-3.6 Z M718.3 685.3 h3.6 v3.7 h-3.6 Z M737.3 687.8 h3.6 v1.2 h-3.6 Z M811.3 688.3 h3.6 v1 h-3.6 Z M830.3 689 h3.6 v4.6 h-3.6 Z M848.3 689 h3.6 v13.4 h-3.6 Z M867.3 689 h3.6 v16.4 h-3.6 Z M886.3 689 h3.6 v19.4 h-3.6 Z M923.3 689 h3.6 v18.9 h-3.6 Z M941.3 689 h3.6 v20.9 h-3.6 Z M997.3 689 h3.6 v15.9 h-3.6 Z M1016.3 689 h3.6 v21.9 h-3.6 Z M1034.3 689 h3.6 v23.9 h-3.6 Z M1090.3 689 h3.6 v15.1 h-3.6 Z M1220.3 679.8 h3.6 v9.2 h-3.6 Z" fill="#00ffff"/>
<polyline points="13.5,686.8 32.5,684.5 51.5,683.3 69.5,683.3 88.5,682.8 106.5,681.5 125.5,681.5 144.5,678.5 162.5,676.5 181.5,674.7 199.5,671.5 218.5,670.2 237.5,666.4 255.5,663.4 274.5,663.4 292.5,661.4 311.5,661.4 330.5,659.7 348.5,659.7 367.5,659.7 385.5,661.4 404.5,664.4 423.5,669.7 441.5,677.8 460.5,682.8 478.5,684.8 497.5,687.8 516.5,696.6 534.5,700.9 553.5,702.9 571.5,704.6 590.5,707.9 609.5,708.7 627.5,705.4 646.5,704.1 664.5,702.9 683.5,698.6 702.5,698.6 720.5,699.9 739.5,702.6 757.5,702.9 776.5,699.9 795.5,697.9 813.5,699.9 832.5,705.9 850.5,715.4 869.5,723.5 888.5,728 906.5,730 925.5,733 943.5,741.1 962.5,743.1 981.5,740.6 999.5,750.6 1018.5,761.2 1036.5,767.7 1055.5,769.5 1074.5,767 1092.5,772 1111.5,772 1129.5,769.5 1148.5,767 1167.5,760.7 1185.5,758.2 1204.5,755.7 1222.5,754.4 1241.5,752.6 1260.5,745.1 1278.5,737.6 1297.5,731.8" fill="none" stroke="#a84646" stroke-width="1.35"/>
<polyline points="13.5,674 32.5,677.2 51.5,680.3 69.5,682.3 88.5,682.8 106.5,683.5 125.5,683.5 144.5,683.5 162.5,682.8 181.5,680.8 199.5,679.5 218.5,677.8 237.5,676.5 255.5,673.5 274.5,671.5 292.5,669.5 311.5,667.7 330.5,665.9 348.5,664.7 367.5,662.7 385.5,661.4 404.5,661.4 423.5,662.7 441.5,663.9 460.5,666.9 478.5,669 497.5,672.2 516.5,676 534.5,681 553.5,684.8 571.5,689.6 590.5,694.1 609.5,697.4 627.5,700.4 646.5,702.1 664.5,703.6 683.5,703.6 702.5,703.6 720.5,703.6 739.5,703.2 757.5,702.9 776.5,701.9 795.5,700.9 813.5,699.9 832.5,700.9 850.5,702.9 869.5,704.9 888.5,707.9 906.5,710.9 925.5,714.7 943.5,719.2 962.5,724.2 981.5,729.3 999.5,734.3 1018.5,739.3 1036.5,744.4 1055.5,748.9 1074.5,752.6 1092.5,756.2 1111.5,760.5 1129.5,763.2 1148.5,767 1167.5,768.2 1185.5,768.2 1204.5,765.7 1222.5,764.5 1241.5,762 1260.5,758.7 1278.5,755.2 1297.5,751.9" fill="none" stroke="#2e9898" stroke-width="1.35"/>
<rect x="2.5" y="25.5" width="1493" height="377" fill="none" stroke="#555555" stroke-width="1"/>
<rect x="2.5" y="404.5" width="1493" height="189" fill="none" stroke="#555555" stroke-width="1"/>
<rect x="2.5" y="595.5" width="1493" height="189" fill="none" stroke="#555555" stroke-width="1"/>
<rect x="1475.5" y="414.5" width="10" height="10" fill="#fff" stroke="#333" stroke-width="1.4"/>
<path d="M1477.5 416.5 l6 6 M1483.5 416.5 l-6 6" stroke="#666" stroke-width="0.9"/>
<rect x="1475.5" y="605.5" width="10" height="10" fill="#fff" stroke="#333" stroke-width="1.4"/>
<path d="M1477.5 607.5 l6 6 M1483.5 607.5 l-6 6" stroke="#666" stroke-width="0.9"/>
<text x="1501.5" y="59.5" class="ax">16</text>
<text x="1501.5" y="122.5" class="ax">15</text>
<text x="1501.5" y="185.5" class="ax">15</text>
<text x="1501.5" y="249.5" class="ax">15</text>
<text x="1501.5" y="312.5" class="ax">15</text>
<text x="1501.5" y="375.5" class="ax">15</text>
<text x="1501.5" y="414.5" class="ax">10</text>
<text x="1501.5" y="502.5" class="ax">50</text>
<text x="1501.5" y="590.5" class="ax">0.</text>
<text x="1501.5" y="605.5" class="ax">0.</text>
<text x="1501.5" y="693.5" class="ax">0.</text>
<text x="1501.5" y="781.5" class="ax">-0</text>
<text x="0" y="800" class="tl" textLength="74" lengthAdjust="spacingAndGlyphs">04/02 19:10</text>
<text x="181.5" y="800" text-anchor="middle" class="tl" textLength="33" lengthAdjust="spacingAndGlyphs">19:55</text>
<text x="367.5" y="800" text-anchor="middle" class="tl" textLength="33" lengthAdjust="spacingAndGlyphs">20:45</text>
<text x="553.5" y="800" text-anchor="middle" class="tl" textLength="33" lengthAdjust="spacingAndGlyphs">21:35</text>
<text x="739.5" y="800" text-anchor="middle" class="tl" textLength="33" lengthAdjust="spacingAndGlyphs">22:25</text>
<text x="925.5" y="800" text-anchor="middle" class="tl" textLength="33" lengthAdjust="spacingAndGlyphs">23:15</text>
<text x="1111.5" y="800" text-anchor="middle" class="tl" textLength="74" lengthAdjust="spacingAndGlyphs">04/03 00:05</text>
<text x="1297.5" y="800" text-anchor="middle" class="tl" textLength="33" lengthAdjust="spacingAndGlyphs">00:55</text>
<rect x="0" y="804" width="10" height="5" fill="#c8c8c8"/>
<rect x="1446" y="804" width="10" height="5" fill="#999"/>
<rect x="1477" y="804" width="10" height="5" fill="#999"/>
<rect x="1487" y="804" width="9" height="5" fill="#ccc"/>
<ellipse cx="1222" cy="812" rx="13" ry="6" fill="#c4dcf4"/>
</svg>
<div class="tog" style="left:27px;top:31px"><b></b></div>
<div class="tog" style="left:7px;top:415px"><b></b></div>
<div class="tog" style="left:7px;top:606px"><b></b></div>
<div class="pill" style="left:50px;top:30px;width:60.9px"><i style="background:#ff0000"></i><span class="ptx" data-k="ptx|転換線(9)" style="transform:scaleX(0.9666)">転換線(9)</span></div>
<div class="pill" style="left:126px;top:30px;width:66.9px"><i style="background:#ffcc00"></i><span class="ptx" data-k="ptx|基準線(26)" style="transform:scaleX(0.9684)">基準線(26)</span></div>
<div class="pill" style="left:208px;top:30px;width:66.9px"><i style="background:#8888ff"></i><span class="ptx" data-k="ptx|先行１(26)" style="transform:scaleX(0.9684)">先行１(26)</span></div>
<div class="pill" style="left:290px;top:30px;width:67.5px"><i style="background:#00ee33"></i><span class="ptx" data-k="ptx|先行２(52)" style="transform:scaleX(0.9798)">先行２(52)</span></div>
<div class="pill" style="left:373px;top:30px;width:56.8px"><i style="background:#3366ff"></i><span class="ptx" data-k="ptx|遅行(26)" style="transform:scaleX(0.9817)">遅行(26)</span></div>
<div class="pill" style="left:50px;top:51px;width:81.3px"><i style="background:#44aa00"></i><span class="ptx" data-k="ptx|ボリンジャー(20)" style="transform:scaleX(0.7632)">ボリンジャー(20)</span></div>
<div class="pill" style="left:147px;top:51px;width:96.7px"><i style="background:#44aa00"></i><span class="ptx" data-k="ptx|ボリンジャー(1σ)(1)" style="transform:scaleX(0.8095)">ボリンジャー(1σ)(1)</span></div>
<div class="pill" style="left:259px;top:51px;width:96.6px"><i style="background:#ff6600"></i><span class="ptx" data-k="ptx|ボリンジャー(2σ)(2)" style="transform:scaleX(0.8085)">ボリンジャー(2σ)(2)</span></div>
<div class="pill" style="left:371px;top:51px;width:100.9px"><i style="background:#44aa00"></i><span class="ptx" data-k="ptx|ボリンジャー(-1σ)(1)" style="transform:scaleX(0.8215)">ボリンジャー(-1σ)(1)</span></div>
<div class="pill" style="left:487px;top:51px;width:100.8px"><i style="background:#000088"></i><span class="ptx" data-k="ptx|ボリンジャー(-2σ)(2)" style="transform:scaleX(0.8206)">ボリンジャー(-2σ)(2)</span></div>
<div class="pill" style="left:50px;top:72px;width:35.5px"><i style="background:#883366"></i><span class="ptx" data-k="ptx|上昇" style="transform:scaleX(0.8864)">上昇</span></div>
<div class="pill" style="left:101.4px;top:72px;width:35.2px"><i style="background:#8888cc"></i><span class="ptx" data-k="ptx|下降" style="transform:scaleX(0.8727)">下降</span></div>
<div class="pill" style="left:32px;top:415px;width:53.7px"><i style="background:#cc8080"></i><span class="ptx" data-k="ptx|RSI(10)" style="transform:scaleX(0.9946)">RSI(10)</span></div>
<div class="pill" style="left:101px;top:415px;width:62.5px"><i style="background:#880088"></i><span class="ptx" data-k="ptx|シグナル(3)" style="transform:scaleX(0.8094)">シグナル(3)</span></div>
<div class="pill" style="left:32px;top:606px;width:81.9px"><i style="background:#880000"></i><span class="ptx" data-k="ptx|MACD(12,26)" style="transform:scaleX(0.9799)">MACD(12,26)</span></div>
<div class="pill" style="left:129px;top:606px;width:62.7px"><i style="background:#008080"></i><span class="ptx" data-k="ptx|シグナル(9)" style="transform:scaleX(0.8128)">シグナル(9)</span></div>
<div class="pill" style="left:207px;top:606px;width:91.6px"><i style="background:#0000ee"></i><span class="ptx" data-k="ptx|オシレーター(上昇)" style="transform:scaleX(0.7931)">オシレーター(上昇)</span></div>
<div class="pill" style="left:314px;top:606px;width:90px"><i style="background:#00ffff"></i><span class="ptx" data-k="ptx|オシレーター(下降)" style="transform:scaleX(0.7763)">オシレーター(下降)</span></div>
</body></html>
